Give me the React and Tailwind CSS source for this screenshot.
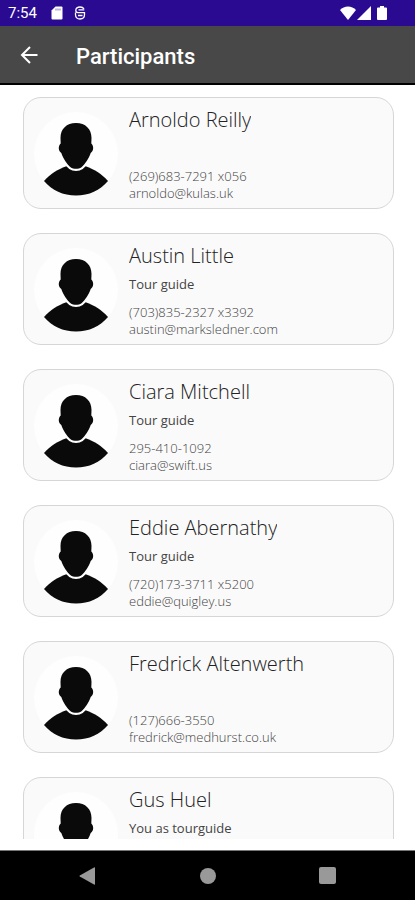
const PARTICIPANTS = [
  { name: 'Arnoldo Reilly', role: '', phone: '(269)683-7291 x056', email: 'arnoldo@kulas.uk' },
  { name: 'Austin Little', role: 'Tour guide', phone: '(703)835-2327 x3392', email: 'austin@marksledner.com' },
  { name: 'Ciara Mitchell', role: 'Tour guide', phone: '295-410-1092', email: 'ciara@swift.us' },
  { name: 'Eddie Abernathy', role: 'Tour guide', phone: '(720)173-3711 x5200', email: 'eddie@quigley.us' },
  { name: 'Fredrick Altenwerth', role: '', phone: '(127)666-3550', email: 'fredrick@medhurst.co.uk' },
  { name: 'Gus Huel', role: 'You as tourguide', phone: '', email: '' },
];

const Avatar = () => (
  <svg viewBox="0 0 84 84" className="size-21 shrink-0" aria-hidden="true">
    <circle cx="42" cy="42" r="42" fill="#fefefe" />
    {/* Shoulders */}
    <path
      d="M10 69C16 62 24 57 33 54L51 54C60 57 68 62 74 69C66 78.500 55 83.500 42 83.500C29 83.500 18 78.500 10 69Z"
      fill="#0a0a0a"
    />
    {/* Head, with a white rim where it overlaps the collar */}
    <path
      d="M42 11C32.500 11 26.500 17 26.500 26L26.700 31.500C24 34 24.200 39 27.300 41C29 46.500 33 52 36.500 55.200C39.500 57.300 44.500 57.300 47.500 55.200C51 52 55 46.500 56.700 41C59.800 39 60 34 57.300 31.500L57.500 26C57.500 17 51.500 11 42 11Z"
      fill="#0a0a0a"
      stroke="#fefefe"
      strokeWidth="4.400"
      paintOrder="stroke"
    />
  </svg>
);

const ParticipantCard = ({ name, role, phone, email }) => (
  <li className="flex h-28 shrink-0 rounded-[18px] border border-[#d6d6d6] bg-[#fafafa] pl-2.5 text-[13px]">
    <div className="pt-3.5">
      <Avatar />
    </div>
    <div className="min-w-0 pt-2 pl-[11px]">
      <h2 className="truncate text-xl leading-7 font-light text-[#222222]">{name}</h2>
      <p className="mt-1 h-5 leading-5 font-medium text-[#444444]">{role}</p>
      <p className="mt-2.5 leading-[17px] font-light text-[#444444]">{phone}</p>
      <p className="leading-[17px] font-light text-[#444444]">{email}</p>
    </div>
  </li>
);

const StatusBar = () => (
  <div className="flex h-[26px] shrink-0 items-center justify-between bg-[#290a91] pr-7 pl-2 font-[Roboto,sans-serif] text-white">
    <div className="flex items-center">
      <span className="w-[43px] text-[15px]">7:54</span>
      <svg viewBox="0 0 12 14" className="h-3.5 w-3" fill="currentColor" aria-hidden="true">
        <path d="M4.500 0.500H10.500Q11.500 0.500 11.500 1.500V12.500Q11.500 13.500 10.500 13.500H1.500Q0.500 13.500 0.500 12.500V4.500Z" />
        <path d="M5 2.500V4.500M7 2.500V4.500M9 2.500V4.500" stroke="#290a91" strokeWidth="0.600" />
      </svg>
      <svg viewBox="0 0 12 14" className="ml-[11px] h-3.5 w-3" fill="none" stroke="currentColor" strokeWidth="1.300" aria-hidden="true">
        <path d="M10 2.800C9 1.300 7.500 1 6 1C3.500 1 1.800 2.300 1.800 4.200C1.800 5.800 2.800 6.600 4 6.600H10.500V8.500C10.500 11.500 8.800 13 6 13C3.200 13 1.500 11.500 1.500 8.500V6.500" />
        <path d="M4 9.500H8.500M4.500 3.800H10.300" />
      </svg>
    </div>
    <div className="flex items-center" aria-hidden="true">
      <svg viewBox="0 0 16 14" className="h-3.5 w-4" fill="currentColor">
        <path d="M8 14L0 4C2 2 5 0.500 8 0.500S14 2 16 4Z" />
      </svg>
      <svg viewBox="0 0 14 14" className="ml-px size-3.5" fill="currentColor">
        <path d="M14 0V14H0Z" />
      </svg>
      <svg viewBox="0 0 10 14" className="ml-1.5 h-3.5 w-2.5" fill="currentColor">
        <path d="M3 0H7V1.500H9Q10 1.500 10 2.500V13Q10 14 9 14H1Q0 14 0 13V2.500Q0 1.500 1 1.500H3Z" />
      </svg>
    </div>
  </div>
);

const Header = () => (
  <header className="flex h-[59px] shrink-0 items-center border-b-2 border-black bg-[#484848] pt-1 pl-5 text-white">
    <button type="button" aria-label="Back" className="w-14 cursor-pointer pb-1">
      <svg viewBox="0 0 20 20" className="size-5" fill="none" stroke="currentColor" strokeWidth="2" aria-hidden="true">
        <path d="M17.500 10H2.500M10 2L2 10L10 18" />
      </svg>
    </button>
    <h1 className="font-[Roboto,sans-serif] text-[22px] font-medium">Participants</h1>
  </header>
);

const NavBar = () => (
  <nav className="flex h-[50px] shrink-0 items-center justify-around border-t border-[#777777] bg-black px-7 text-[#999999]">
    <button type="button" aria-label="Back" className="cursor-pointer">
      <svg viewBox="0 0 18 18" className="size-[18px]" fill="currentColor" aria-hidden="true">
        <path d="M15 0.500Q16 0 16 1V17Q16 18 15 17.500L0.800 9.500Q0 9 0.800 8.500Z" />
      </svg>
    </button>
    <button type="button" aria-label="Home" className="size-4 cursor-pointer rounded-full bg-[#999999]" />
    <button type="button" aria-label="Recent apps" className="size-[17px] cursor-pointer rounded-xs bg-[#999999]" />
  </nav>
);

const App = () => (
  <div className="flex h-screen flex-col bg-white font-['Open_Sans',sans-serif]">
    <StatusBar />
    <Header />
    <main className="mb-[11px] min-h-0 flex-1 overflow-hidden">
      <ul className="flex flex-col gap-6 pt-3 pr-[21px] pl-[23px]">
        {PARTICIPANTS.map((participant) => (
          <ParticipantCard key={participant.name} {...participant} />
        ))}
      </ul>
    </main>
    <NavBar />
  </div>
);

export default App;
